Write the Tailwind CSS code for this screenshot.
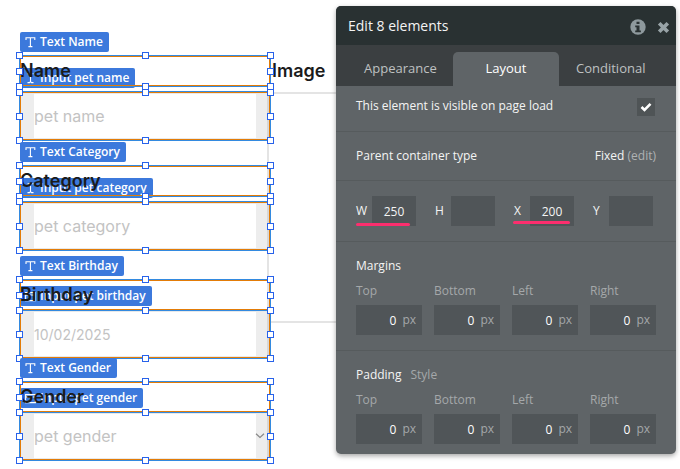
<!DOCTYPE html>
<html lang="en">
<head>
<meta charset="utf-8">
<title>Editor</title>
<script src="https://cdn.jsdelivr.net/npm/@tailwindcss/browser@4"></script>
</head>
<body class="relative h-[469px] w-[680px] overflow-hidden bg-white">
<main id="canvas" class="absolute inset-0 font-['Inter',sans-serif]">
  <div class="absolute left-[267px] top-[92px] h-[231px] w-[120px] border-2 border-[#e4e4e4]"></div>
  <div class="absolute left-[272px] top-[59px] z-20 text-[18px] leading-6 font-semibold text-[#1b1b1b]">Image</div>
</main>

<aside class="absolute left-[336px] top-[6px] z-50 flex h-[448px] w-[340px] flex-col overflow-hidden rounded-[5px] bg-[#5f6467] font-['Open_Sans',sans-serif] text-[12px] text-[#f4f4f4] shadow-[0_2px_5px_rgba(0,0,0,0.35)]">
  <header class="flex h-[39px] shrink-0 items-center bg-[#293132] pr-[6px] pl-3">
    <h1 class="text-[14px] leading-5 whitespace-nowrap">Edit 8 elements</h1>
    <svg class="mt-[2px] ml-auto" width="16" height="16" viewBox="0 0 16 16"><circle cx="8" cy="8" r="7.7" fill="#8e999d"/><path d="M6.5 2.7h3v2.4h-3zM5.2 6.5h4.3v5h1.4v1.7H5.2v-1.7h1.3V8.2H5.2z" fill="#293132"/></svg>
    <svg class="mt-[3px] ml-[11px]" width="13" height="13" viewBox="0 0 13 13"><path d="M2.2 2.2l8.6 8.6M10.8 2.2l-8.6 8.6" stroke="#98a3a7" stroke-width="3.7"/></svg>
  </header>
  <nav class="flex h-[41px] shrink-0 items-end bg-[#3b3f41] text-[13px] text-[#bfc1c2]">
    <div class="flex h-[34px] w-[117px] items-center pl-7">Appearance</div>
    <div class="flex h-[34px] w-[106px] items-center justify-center rounded-t-[5px] bg-[#5f6467] text-white">Layout</div>
    <div class="flex h-[34px] flex-1 items-center pl-[17px]">Conditional</div>
  </nav>
  <div class="flex h-[46px] shrink-0 items-center justify-between border-b border-[#565b5d] pr-[21px] pb-[5px] pl-5">
    <span>This element is visible on page load</span>
    <div class="mt-[1px] flex size-[18px] items-center justify-center bg-[#4f5456]"><svg width="12" height="10" viewBox="0 0 12 10"><path d="M1.5 5l3 3L10.5 1.8" fill="none" stroke="#fff" stroke-width="2.6"/></svg></div>
  </div>
  <div class="flex h-[49px] shrink-0 items-center justify-between border-b border-[#565b5d] pr-5 pl-5">
    <span>Parent container type</span>
    <span>Fixed <span class="text-[#afb2b3]">(edit)</span></span>
  </div>
  <div class="relative flex h-[61px] shrink-0 items-start gap-[19px] border-b border-[#565b5d] pt-[15px] pl-5">
    <label class="flex h-[30px] w-[60px] items-center justify-between">W<span class="flex h-[30px] w-11 items-center justify-center bg-[#505558] pt-[2px]">250</span></label>
    <label class="flex h-[30px] w-[60px] items-center justify-between">H<span class="h-[30px] w-11 bg-[#505558]"></span></label>
    <label class="flex h-[30px] w-[60px] items-center justify-between">X<span class="flex h-[30px] w-11 items-center justify-center bg-[#505558] pt-[2px]">200</span></label>
    <label class="flex h-[30px] w-[60px] items-center justify-between">Y<span class="h-[30px] w-11 bg-[#505558]"></span></label>
    <i class="absolute top-[42px] left-5 h-[3px] w-[54px] rounded-full bg-[#fc2e6e]"></i>
    <i class="absolute top-[40px] left-[177px] h-[3px] w-[57px] rounded-full bg-[#fc2e6e]"></i>
  </div>
  <section class="h-[109px] shrink-0 border-b border-[#565b5d] pt-[15px] pl-5">
    <h2 class="h-5 leading-[18px]">Margins</h2>
    <div class="spacing mt-[5px] flex gap-3"></div>
  </section>
  <section class="h-[103px] shrink-0 pt-[15px] pl-5">
    <h2 class="flex h-5 gap-[9px] leading-[18px]"><span>Padding</span><span class="text-[#a5a8aa]">Style</span></h2>
    <div class="spacing mt-[5px] flex gap-3"></div>
  </section>
</aside>

<script>
const canvas = document.getElementById('canvas');
function add(html) { canvas.insertAdjacentHTML('beforeend', html); }
// Each field: caption frame [top, bottom], input frame [top, bottom], first input handle row, tag rows and widths
const fields = [
  {t:'Name', box:[55,87], mid:71, inp:[91,141], ih:92, im:116, tag:32, tw:89, sub:68, sw:115, txt:59, ph:'pet name', icon:'input'},
  {t:'Category', box:[165,197], mid:181, inp:[201,251], ih:201, im:226, tag:142, tw:106, sub:178, sw:133, txt:169, ph:'pet category', icon:'input'},
  {t:'Birthday', box:[279,311], mid:295, inp:[309,359], ih:310, im:334, tag:256, tw:104, sub:286, sw:132, txt:283, ph:'10/02/2025', icon:'date'},
  {t:'Gender', box:[381,413], mid:397, inp:[411,461], ih:412, im:436, tag:358, tw:97, sub:388, sw:123, txt:385, ph:'pet gender', icon:'date'},
];
const icons = {
  text: '<path d="M1 3V.8h8.8V3M5.4.8v8.7M3.4 9.6h4" fill="none" stroke="#fff" stroke-width="1.1"/>',
  input: '<path d="M2.5.8h2l1 1 1-1h2M5.5 1.8v7M2.5 9.6h2l1-1 1 1h2" fill="none" stroke="#fff" stroke-width="1.1"/>',
  date: '<path d="M.6 1.6h9.8v8H.6zM.6 4h9.8" fill="none" stroke="#fff" stroke-width="1.1"/>'
};
const tag = (text, icon, top, w, z) => `<div class="absolute left-[20px] flex h-5 items-center whitespace-nowrap rounded-[2px] bg-[#3c79dc] pl-[5px] font-['Open_Sans',sans-serif] text-[12px] leading-4 font-semibold text-white ${z}" style="top:${top}px;width:${w}px"><svg class="mr-1" width="11" height="11" viewBox="0 0 11 11">${icons[icon]}</svg>${text}</div>`;
const frame = (a, b) => `<div class="absolute left-[19px] z-30 w-[252px] border border-[#338ae0]" style="top:${a}px;height:${b-a}px"><div class="h-full border border-[#e37c08]"></div></div>`;
const handles = (a, m, b) => [16,142,267].map(x => [a,m,b].map(y => x === 142 && y === m ? '' : `<i class="absolute z-40 size-[7px] border border-[#2862ea] bg-white" style="left:${x}px;top:${y-3}px"></i>`).join('')).join('');
fields.forEach(f => {
  const [a, b] = f.inp, date = f.t === 'Birthday';
  add(`<div class="absolute left-[21px] flex w-[248px] items-center justify-between border-y border-[#e9e9e9] bg-white" style="top:${a+2}px;height:${b-a-4}px"><span class="h-full w-[13px] bg-[#ededed]"></span><span class="flex-1 text-[#c3c3c3] ${date ? 'text-[14px]' : 'text-[16px]'}">${f.ph}</span><span class="flex h-full w-[13px] items-center border-r-2 border-[#d8d8d8] bg-[#ededed]">${f.t === 'Gender' ? '<svg class="-ml-px shrink-0" width="10" height="6" viewBox="0 0 10 6"><path d="M1 .8l4 3.7L9 .8" fill="none" stroke="#888" stroke-width="1.2"/></svg>' : ''}</span></div>`);
  add(tag('Input pet ' + f.t.toLowerCase(), f.icon, f.sub, f.sw, 'z-10'));
  add(`<div class="absolute left-[20px] z-20 text-[18px] leading-6 font-semibold text-[#1b1b1b]" style="top:${f.txt}px">${f.t}</div>`);
  add(frame(...f.inp) + frame(...f.box));
  add(handles(f.box[0], f.mid, 2 * f.mid - f.box[0] - 1) + handles(f.ih, f.im, b-1));
  add(tag('Text ' + f.t, 'text', f.tag, f.tw, 'z-[45]'));
});
document.querySelectorAll('.spacing').forEach(el => {
  el.innerHTML = ['Top','Bottom','Left','Right'].map(s => `<label class="w-[66px] text-[#a5a8aa]"><span class="flex h-[23px] items-start leading-[18px]">${s}</span><span class="flex h-[30px] items-center justify-end gap-[6px] bg-[#505558] pr-[6px]"><b class="pt-px font-normal text-white">0</b>px</span></label>`).join('');
});
</script>
</body>
</html>
